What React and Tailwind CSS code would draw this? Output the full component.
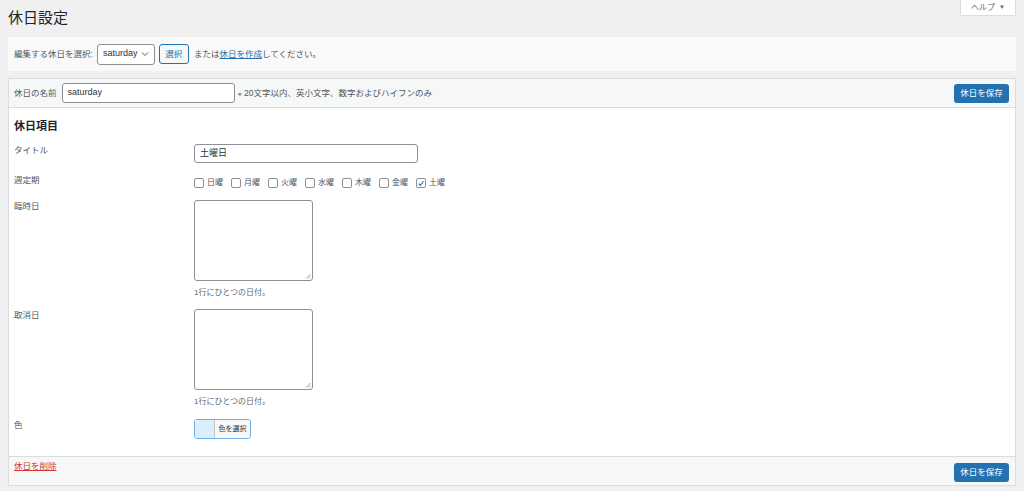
import React from "react";

const font = { fontFamily: '"Liberation Sans", "Noto Sans CJK JP", sans-serif' };

function Check({ checked }) {
  return (
    <span className="w-[10px] h-[10px] border border-[#8c8f94] rounded-[2px] bg-white flex items-center justify-center">
      {checked && (
        <svg width="9" height="9" viewBox="0 0 10 10">
          <path d="M2 5.2 L4.2 7.4 L8.2 2.2" fill="none" stroke="#2271b1" strokeWidth="1.4" />
        </svg>
      )}
    </span>
  );
}

function Row({ label, children, className = "" }) {
  return (
    <div className={"flex " + className}>
      <div className="w-[180px] shrink-0 text-[8.5px] text-[#50575e]">{label}</div>
      <div className="flex-1">{children}</div>
    </div>
  );
}

function Textarea() {
  return (
    <div className="h-[81px] w-[119px] border border-[#8c8f94] rounded-[3px] bg-white relative">
      <svg className="absolute right-[1px] bottom-[1px]" width="6" height="6" viewBox="0 0 6 6">
        <path d="M5.5 1 L1 5.5 M5.5 3.5 L3.5 5.5" stroke="#8c8f94" strokeWidth="0.8" />
      </svg>
    </div>
  );
}

export default function App() {
  const days = ["日曜", "月曜", "火曜", "水曜", "木曜", "金曜", "土曜"];
  return (
    <div className="w-[1024px] h-[491px] bg-[#f0f0f1] overflow-hidden text-[#3c434a] relative" style={font}>
      <div className="absolute right-[8px] top-0 h-[16px] w-[56px] bg-white border border-[#dcdcde] border-t-0 rounded-b-[2px] flex items-center justify-center text-[8px] text-[#646970]">
        ヘルプ <span className="ml-[4px] text-[6px]">▼</span>
      </div>
      <div className="px-[8px]">
        <h1 className="text-[15px] text-[#1d2327] pt-[8px] h-[37px] leading-[20px]">休日設定</h1>
        <div className="h-[34px] bg-[#f9f9f9] flex items-center px-[6px] text-[8.5px] text-[#50575e]">
          <span>編集する休日を選択:</span>
          <div className="ml-[4px] h-[21px] w-[58px] border border-[#8c8f94] rounded-[3px] bg-white flex items-center px-[5px] text-[9px] text-[#2c3338]">
            saturday
            <svg className="ml-auto" width="8" height="6" viewBox="0 0 8 6">
              <path d="M1 1.5 L4 4.5 L7 1.5" fill="none" stroke="#50575e" strokeWidth="1" />
            </svg>
          </div>
          <div className="ml-[4px] h-[20px] w-[30px] border border-[#2271b1] rounded-[3px] bg-[#f6f7f7] text-[#2271b1] flex items-center justify-center">選択</div>
          <span className="ml-[5px]">または<span className="text-[#2271b1] underline">休日を作成</span>してください。</span>
        </div>
        <div className="mt-[7px] border border-[#dcdcde] bg-white">
          <div className="h-[29px] bg-[#f6f7f7] border-b border-[#dcdcde] flex items-center px-[5px] text-[8.5px] text-[#50575e]">
            <span>休日の名前</span>
            <div className="ml-[5px] h-[20px] w-[173px] border border-[#8c8f94] rounded-[3px] bg-white flex items-center px-[5px] text-[9px] text-[#2c3338]">saturday</div>
            <span className="ml-[3px] text-[8.5px]"><span className="text-[7px] text-[#8c8f94]">●</span> 20文字以内、英小文字、数字およびハイフンのみ</span>
            <div className="ml-auto mr-[1px] h-[19px] w-[55px] bg-[#2271b1] rounded-[3px] text-white text-[8.5px] flex items-center justify-center">休日を保存</div>
          </div>
          <div className="px-[5px] pt-[11px] h-[348px]">
            <h2 className="text-[11px] font-bold text-[#1d2327] leading-[14px]">休日項目</h2>
            <Row label="タイトル" className="mt-[11px]">
              <div className="h-[19px] w-[224px] border border-[#8c8f94] rounded-[3px] bg-white flex items-center px-[5px] text-[9px] text-[#2c3338]">土曜日</div>
            </Row>
            <Row label="週定期" className="mt-[11px]">
              <div className="flex items-center gap-[8px] text-[8px] text-[#50575e] mt-[3px]">
                {days.map((d, i) => (
                  <span key={d} className="flex items-center gap-[3px]">
                    <Check checked={i === 6} />
                    {d}
                  </span>
                ))}
              </div>
            </Row>
            <Row label="臨時日" className="mt-[11px]">
              <Textarea />
              <div className="mt-[6px] text-[8px] text-[#646970]">1行にひとつの日付。</div>
            </Row>
            <Row label="取消日" className="mt-[10px]">
              <Textarea />
              <div className="mt-[6px] text-[8px] text-[#646970]">1行にひとつの日付。</div>
            </Row>
            <Row label="色" className="mt-[11px]">
              <div className="h-[20px] w-[57px] border border-[#72aee6] rounded-[3px] flex overflow-hidden">
                <div className="w-[20px] bg-[#ddeefb] border-r border-[#c3c4c7]"></div>
                <div className="flex-1 bg-[#f6f7f7] text-[7px] text-[#2c3338] flex items-center justify-center">色を選択</div>
              </div>
            </Row>
          </div>
          <div className="h-[29px] bg-[#f6f7f7] border-t border-[#dcdcde] flex items-start px-[5px] pt-[3px]">
            <span className="text-[8.5px] text-[#d63638] underline">休日を削除</span>
            <div className="ml-auto mr-[1px] mt-[3px] h-[19px] w-[55px] bg-[#2271b1] rounded-[3px] text-white text-[8.5px] flex items-center justify-center">休日を保存</div>
          </div>
        </div>
      </div>
    </div>
  );
}
